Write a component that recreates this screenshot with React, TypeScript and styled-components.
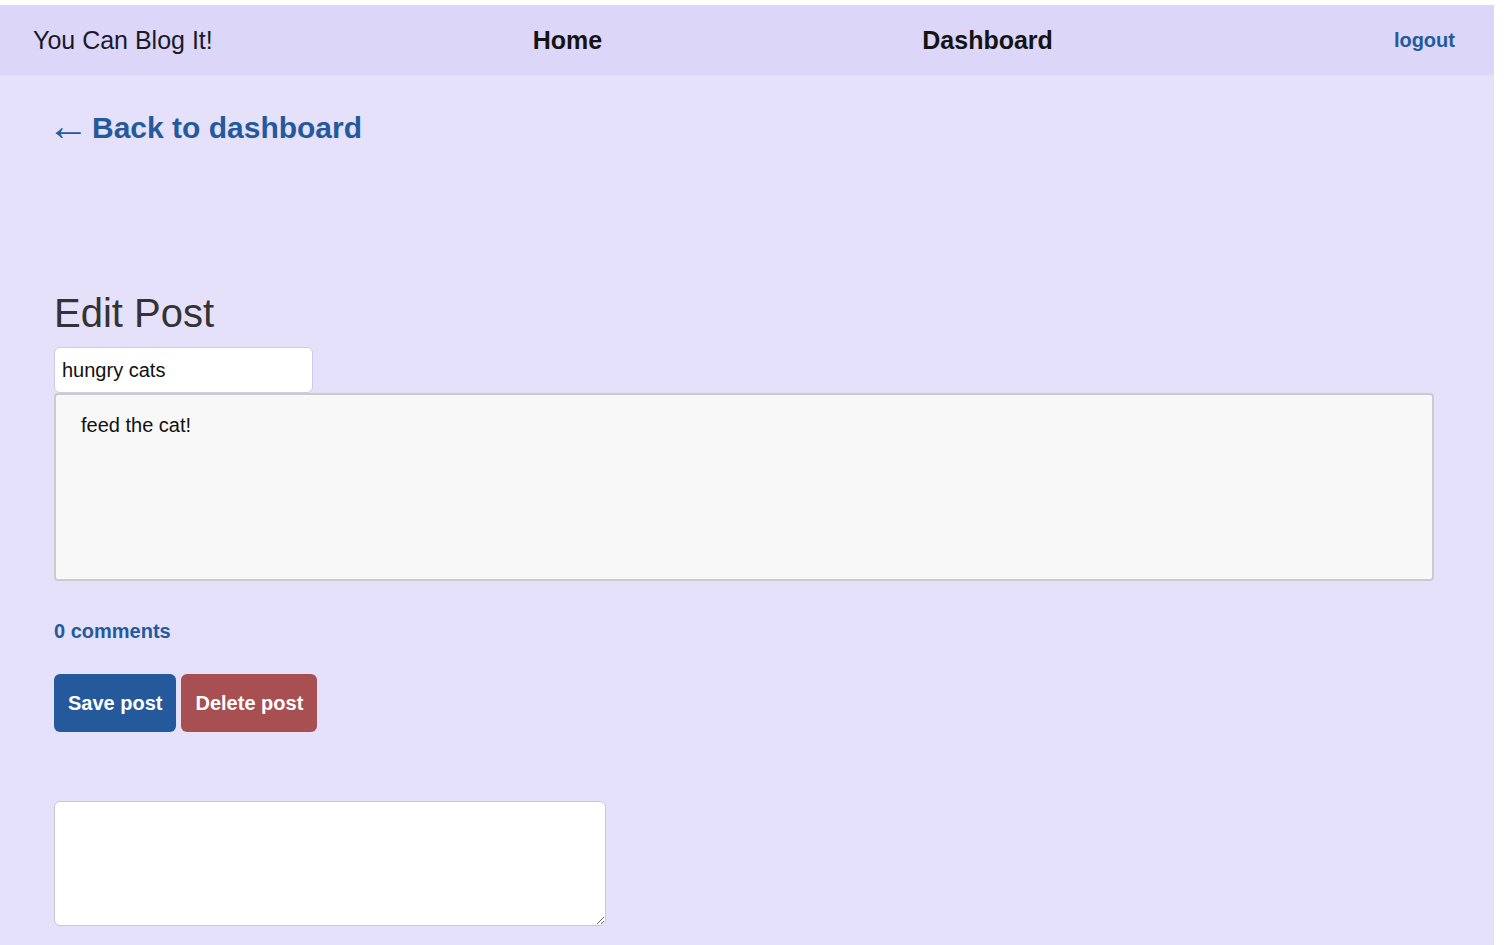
import React from "react";
import styled, { createGlobalStyle } from "styled-components";

const Global = createGlobalStyle`
  html, body { margin: 0; padding: 0; background: #ffffff; }
  body { font-family: "Liberation Sans", Arial, sans-serif; }
  * { box-sizing: border-box; }
`;

const Page = styled.div`
  margin-top: 5px;
  width: 1494px;
  min-height: 940px;
  background: #e6e1fb;
`;

const Header = styled.header`
  height: 70px;
  background: #dcd6f8;
  display: flex;
  justify-content: space-between;
  align-items: center;
  padding: 1px 39px 0 33px;
`;

const Brand = styled.div`
  font-size: 25px;
  color: #1a1a2a;
`;

const NavLink = styled.a`
  font-size: 25px;
  font-weight: bold;
  color: #141414;
  text-decoration: none;
`;

const Logout = styled.a`
  padding-left: 21px;
  font-size: 20px;
  font-weight: bold;
  color: #245a9c;
  text-decoration: none;
`;

const Main = styled.main`
  padding: 36px 60px 0 54px;
  display: flex;
  flex-direction: column;
  align-items: flex-start;
`;

const BackLink = styled.a`
  font-size: 30px;
  font-weight: bold;
  color: #245a9c;
  text-decoration: none;
  display: flex;
  align-items: center;
  gap: 3px;
`;

const Arrow = styled.span`
  font-weight: normal;
  font-family: "Liberation Serif", serif;
  font-size: 42px;
  line-height: 0;
  margin-left: -7px;
  transform: translateY(-2px);
`;

const Title = styled.h2`
  margin: 146px 0 12px;
  font-size: 40px;
  font-weight: normal;
  color: #333333;
  line-height: 44px;
`;

const TitleInput = styled.input`
  width: 259px;
  height: 46px;
  border: 1px solid #cfcbe0;
  border-radius: 6px;
  background: #ffffff;
  font-family: "Liberation Sans", Arial, sans-serif;
  font-size: 20px;
  color: #111;
  padding: 0 7px;
  outline: none;
`;

const BodyArea = styled.textarea`
  width: 1380px;
  height: 188px;
  border: 2px solid #cbcbcb;
  border-radius: 4px;
  background: #f8f8f8;
  font-family: "Liberation Sans", Arial, sans-serif;
  font-size: 20px;
  color: #111;
  padding: 19px 25px;
  resize: none;
  outline: none;
`;

const Comments = styled.a`
  margin-top: 39px;
  font-size: 20px;
  font-weight: bold;
  color: #245a9c;
  text-decoration: none;
`;

const ButtonRow = styled.div`
  margin-top: 31px;
  display: flex;
  gap: 5px;
`;

const Button = styled.button<{ $tone: "save" | "delete" }>`
  height: 58px;
  padding: 0 14px;
  border: none;
  border-radius: 6px;
  background: ${(p) => (p.$tone === "save" ? "#245a9c" : "#a84f51")};
  color: #ffffff;
  font-family: "Liberation Sans", Arial, sans-serif;
  font-size: 20px;
  font-weight: bold;
`;

const CommentArea = styled.textarea`
  margin-top: 69px;
  width: 552px;
  height: 125px;
  border: 1px solid #c8c6d4;
  border-radius: 6px;
  background: #ffffff;
  outline: none;
`;

export default function App() {
  return (
    <>
      <Global />
      <Page>
        <Header>
          <Brand>You Can Blog It!</Brand>
          <NavLink href="#">Home</NavLink>
          <NavLink href="#">Dashboard</NavLink>
          <Logout href="#">logout</Logout>
        </Header>
        <Main>
          <BackLink href="#">
            <Arrow>←</Arrow>Back to dashboard
          </BackLink>
          <Title>Edit Post</Title>
          <TitleInput defaultValue="hungry cats" />
          <BodyArea defaultValue="feed the cat!" />
          <Comments href="#">0 comments</Comments>
          <ButtonRow>
            <Button $tone="save">Save post</Button>
            <Button $tone="delete">Delete post</Button>
          </ButtonRow>
          <CommentArea />
        </Main>
      </Page>
    </>
  );
}
